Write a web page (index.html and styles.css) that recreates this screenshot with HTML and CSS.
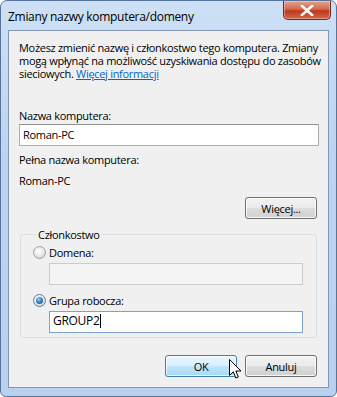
FILE: index.html
```html
<!DOCTYPE html>
<html lang="pl">
<head>
  <meta charset="UTF-8" />
  <title>Zmiany nazwy komputera/domeny</title>
  <link rel="stylesheet" href="styles.css">
</head>
<body>
  <div class="window">
    <div class="titlebar">
      <span class="title">Zmiany nazwy komputera/domeny</span>
      <div class="close">
        <svg width="14" height="11" viewBox="0 0 14 11">
          <path d="M2 1 L12 10 M12 1 L2 10" stroke="#fff" stroke-width="2.6" stroke-linecap="square"/>
        </svg>
      </div>
    </div>

    <div class="client">
      <p class="intro">Możesz zmienić nazwę i członkostwo tego komputera. Zmiany<br>mogą wpłynąć na możliwość uzyskiwania dostępu do zasobów<br>sieciowych. <a href="#">Więcej informacji</a></p>

      <label class="lbl lbl-name">Nazwa komputera:</label>
      <div class="textbox">Roman-PC</div>

      <div class="lbl lbl-full">Pełna nazwa komputera:</div>
      <div class="lbl lbl-value">Roman-PC</div>

      <div class="row-right">
        <button class="btn btn-more">Więcej...</button>
      </div>

      <fieldset class="group">
        <legend>Członkostwo</legend>
        <div class="radio-row">
          <span class="radio"></span>
          <span>Domena:</span>
        </div>
        <div class="textbox textbox-sub disabled"></div>

        <div class="radio-row radio-row-2">
          <span class="radio checked"></span>
          <span>Grupa robocza:</span>
        </div>
        <div class="textbox textbox-sub focused">GROUP2<span class="caret"></span></div>
      </fieldset>

      <div class="buttons">
        <button class="btn btn-default">OK</button>
        <button class="btn">Anuluj</button>
      </div>
    </div>

    <svg class="cursor" width="13" height="21" viewBox="0 0 13 21">
      <path d="M0.5 0.5 L0.5 16.5 L4.3 12.8 L6.8 19 L9.3 18 L6.9 12 L12 12 Z" fill="#fff" stroke="#000" stroke-width="1" stroke-linejoin="round"/>
    </svg>
  </div>
</body>
</html>
```

FILE: styles.css
```css
html, body {
  margin: 0;
  padding: 0;
  background: #ffffff;
}
body {
  font-family: "Open Sans", "Noto Sans", Arial, sans-serif;
  font-size: 11px;
  letter-spacing: -0.3px;
  color: #000;
}
.window {
  position: relative;
  width: 337px;
  height: 397px;
  box-sizing: border-box;
  border: 1px solid #56749a;
  border-radius: 7px 7px 6px 6px;
  background: linear-gradient(180deg, #cde0f5 0%, #bcd4ef 40%, #b9d1ed 100%);
  overflow: hidden;
}
.titlebar {
  height: 29px;
  display: flex;
  align-items: flex-start;
  justify-content: space-between;
  padding-left: 7px;
}
.title {
  margin-top: 7px;
  font-size: 12px;
  color: #000;
}
.close {
  width: 46px;
  height: 18px;
  margin-right: 5px;
  border: 1px solid #6b2a20;
  border-top: none;
  border-radius: 0 0 5px 5px;
  background: linear-gradient(180deg, #e3a18f 0%, #d26a50 45%, #c0391c 55%, #d5664a 100%);
  display: flex;
  align-items: center;
  justify-content: center;
  box-shadow: inset 0 0 0 1px rgba(255,255,255,0.35);
}
.client {
  margin: 0 7px;
  height: 358px;
  box-sizing: border-box;
  border: 1px solid #8197b5;
  background: #f0f0f0;
  padding: 10px 10px 0 10px;
}
.intro {
  margin: 0;
  line-height: 13px;
  white-space: nowrap;
}
.intro a {
  color: #0066cc;
  text-decoration: underline;
}
.lbl {
  display: block;
  line-height: 13px;
}
.lbl-name {
  margin-top: 29px;
}
.textbox {
  height: 22px;
  box-sizing: border-box;
  margin-top: 2px;
  width: 300px;
  border: 1px solid #abadb3;
  border-top-color: #8e8f8f;
  background: #fff;
  padding: 3px 3px;
  line-height: 14px;
}
.lbl-full {
  margin-top: 7px;
}
.lbl-value {
  margin-top: 8px;
}
.row-right {
  display: flex;
  justify-content: flex-end;
  width: 298px;
  margin-top: 10px;
}
.btn {
  font-family: inherit;
  font-size: 11px;
  letter-spacing: -0.3px;
  width: 72px;
  height: 22px;
  padding: 0;
  border: 1px solid #707070;
  border-radius: 3px;
  background: linear-gradient(180deg, #f2f2f2 0%, #ebebeb 48%, #dddddd 52%, #cfcfcf 100%);
  box-shadow: inset 0 0 0 1px rgba(255,255,255,0.8);
  color: #000;
}
.btn-default {
  border-color: #3c7fb1;
  background: linear-gradient(180deg, #eaf6fd 0%, #d9f0fc 48%, #bee6fd 52%, #a7d9f5 100%);
}
.group {
  margin: 9px 0 0 1px;
  width: 297px;
  height: 110px;
  box-sizing: border-box;
  border: 1px solid #d5dfe5;
  border-radius: 3px;
  padding: 0 0 0 12px;
}
.group legend {
  padding: 0 2px;
  margin-left: 3px;
  line-height: 13px;
}
.radio-row {
  display: flex;
  align-items: center;
  gap: 3px;
  margin-top: 5px;
  height: 13px;
}
.radio-row-2 {
  margin-top: 9px;
}
.radio {
  width: 11px;
  height: 11px;
  border-radius: 50%;
  border: 1px solid #a0a0a0;
  background: radial-gradient(circle at 40% 35%, #ffffff 0%, #e6e6e6 55%, #c9c9c9 100%);
  position: relative;
}
.radio.checked {
  border-color: #5b7ea8;
}
.radio.checked::after {
  content: "";
  position: absolute;
  left: 2px;
  top: 2px;
  width: 7px;
  height: 7px;
  border-radius: 50%;
  background: radial-gradient(circle at 40% 35%, #9dd1f2 0%, #2a73b5 55%, #1c4f8a 100%);
}
.textbox-sub {
  width: 254px;
  margin: 3px 0 0 16px;
}
.textbox-sub.disabled {
  background: #f4f4f4;
  border-color: #cccccc;
  margin-top: 4px;
}
.textbox-sub.focused {
  height: 22px;
  margin-top: 4px;
  border-color: #7da2ce;
  font-size: 12px;
  padding-top: 2px;
}
.caret {
  display: inline-block;
  width: 1px;
  height: 14px;
  background: #000;
  vertical-align: -3px;
}
.buttons {
  display: flex;
  justify-content: flex-end;
  gap: 8px;
  width: 298px;
  margin-top: 17px;
}
.cursor {
  position: absolute;
  left: 228px;
  top: 358px;
}
```
